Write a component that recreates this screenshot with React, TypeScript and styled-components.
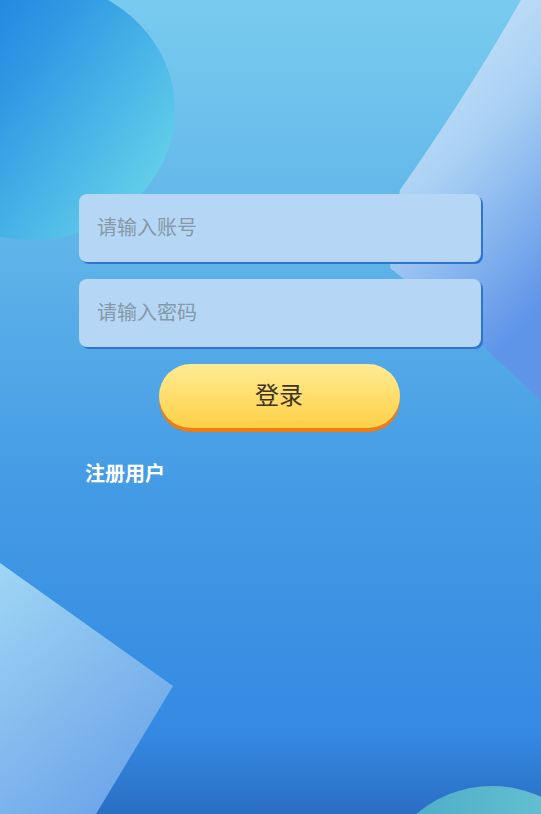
import styled, { createGlobalStyle } from "styled-components";

const GlobalStyle = createGlobalStyle`
  html, body {
    margin: 0;
    padding: 0;
    height: 100%;
  }
  #root {
    height: 100%;
  }
  * {
    box-sizing: border-box;
  }
`;

// decorative background art: gradient sky plus the soft shapes around the form
const Backdrop = () => (
  <BackdropSvg viewBox="0 0 541 814" preserveAspectRatio="none">
    <defs>
      <linearGradient id="bg" x1="0" y1="0" x2="0" y2="1">
        <stop offset="0" stopColor="#79cbee" />
        <stop offset="0.3" stopColor="#5fb4e9" />
        <stop offset="0.6" stopColor="#449be5" />
        <stop offset="0.9" stopColor="#348ae2" />
        <stop offset="1" stopColor="#2a6ec4" />
      </linearGradient>
      <linearGradient id="ball" x1="0" y1="0.1" x2="1" y2="0.75">
        <stop offset="0" stopColor="#1272de" />
        <stop offset="0.45" stopColor="#2f9ae4" />
        <stop offset="1" stopColor="#66d2ea" />
      </linearGradient>
      <linearGradient id="wedge" x1="0" y1="0" x2="0.4" y2="1">
        <stop offset="0" stopColor="#d6ecfb" />
        <stop offset="0.5" stopColor="#a9d0f4" />
        <stop offset="1" stopColor="#5f95e8" />
      </linearGradient>
      <linearGradient id="shard" x1="0" y1="0" x2="0.6" y2="1">
        <stop offset="0" stopColor="#9fd6f4" />
        <stop offset="1" stopColor="#6ea6ea" />
      </linearGradient>
      <linearGradient id="dome" x1="0" y1="0" x2="1" y2="0">
        <stop offset="0" stopColor="#4aa9c8" />
        <stop offset="1" stopColor="#6cc6d2" />
      </linearGradient>
    </defs>
    <rect width="541" height="814" fill="url(#bg)" />
    <ellipse cx="32" cy="110" rx="143" ry="130" fill="url(#ball)" />
    <path d="M521 0 L541 0 L541 402 Q470 330 390 268 Q394 225 400 190 Q470 90 521 0 Z" fill="url(#wedge)" />
    <path d="M0 563 L173 686 L96 814 L0 814 Z" fill="url(#shard)" />
    <circle cx="492" cy="902" r="116" fill="url(#dome)" />
  </BackdropSvg>
);

export default function App() {
  return (
    <>
      <GlobalStyle />
      <Page>
        <Backdrop />
        <Form>
          <Field placeholder="请输入账号" />
          <Field placeholder="请输入密码" type="password" />
          <LoginButton type="button">登录</LoginButton>
          <RegisterLink>注册用户</RegisterLink>
        </Form>
      </Page>
    </>
  );
}

const Page = styled.div`
  position: relative;
  width: 100%;
  height: 100%;
  min-height: 814px;
  overflow: hidden;
  font-family: "Noto Sans CJK SC", "Noto Sans", sans-serif;
`;

const BackdropSvg = styled.svg`
  position: absolute;
  inset: 0;
  width: 100%;
  height: 100%;
  display: block;
`;

const Form = styled.div`
  position: relative;
  display: flex;
  flex-direction: column;
  padding: 194px 0 0 79px;
  width: 483px;
`;

const Field = styled.input`
  height: 68px;
  width: 402px;
  margin-bottom: 17px;
  padding: 0 0 3px 18px;
  border: none;
  border-radius: 8px;
  outline: none;
  background: #b5d7f5;
  box-shadow: 2px 2px 0 #2f74cf;
  font-family: inherit;
  font-size: 20px;
  color: #333;

  &::placeholder {
    color: #8798a8;
  }
`;

const LoginButton = styled.button`
  align-self: center;
  margin: 0 0 0 -4px;
  padding: 0 0 6px;
  width: 241px;
  height: 64px;
  border: none;
  border-radius: 32px;
  background: linear-gradient(#ffec94, #ffd047);
  box-shadow: 0 4px 0 #f47a0c;
  font-family: inherit;
  font-size: 24px;
  color: #3b3522;
  cursor: pointer;
`;

const RegisterLink = styled.a`
  margin: 30px 0 0 6px;
  color: #ffffff;
  font-size: 20px;
  font-weight: bold;
  cursor: pointer;
`;
